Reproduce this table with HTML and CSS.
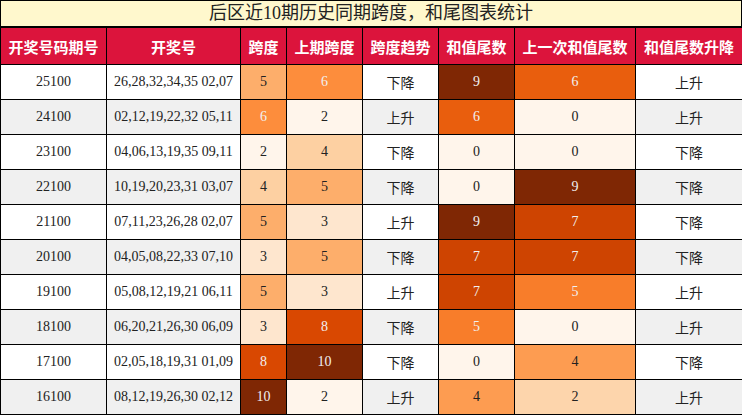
FILE: index.html
```html
<!DOCTYPE html>
<html lang="zh">
<head>
<meta charset="utf-8">
<title>后区近10期历史同期跨度，和尾图表统计</title>
<link rel="stylesheet" href="styles.css">
</head>
<body>
<div class="sheet">
  <div class="title">后区近10期历史同期跨度，和尾图表统计</div>
  <table class="grid">
    <colgroup>
      <col class="c-issue"><col class="c-nums"><col class="c-span"><col class="c-prev">
      <col class="c-trend"><col class="c-sum"><col class="c-psum"><col class="c-dir">
    </colgroup>
    <thead>
      <tr>
        <th>开奖号码期号</th><th>开奖号</th><th>跨度</th><th>上期跨度</th>
        <th>跨度趋势</th><th>和值尾数</th><th>上一次和值尾数</th><th>和值尾数升降</th>
      </tr>
    </thead>
    <tbody>
      <tr>
        <td>25100</td><td>26,28,32,34,35 02,07</td>
        <td class="h h375">5</td><td class="h h500 lt">6</td><td class="cn">下降</td>
        <td class="h h1000 lt">9</td><td class="h s6 lt">6</td><td class="cn">上升</td>
      </tr>
      <tr>
        <td>24100</td><td>02,12,19,22,32 05,11</td>
        <td class="h h500 lt">6</td><td class="h h000">2</td><td class="cn">上升</td>
        <td class="h s6 lt">6</td><td class="h h000">0</td><td class="cn">上升</td>
      </tr>
      <tr>
        <td>23100</td><td>04,06,13,19,35 09,11</td>
        <td class="h h000">2</td><td class="h h250">4</td><td class="cn">下降</td>
        <td class="h h000">0</td><td class="h h000">0</td><td class="cn">下降</td>
      </tr>
      <tr>
        <td>22100</td><td>10,19,20,23,31 03,07</td>
        <td class="h h250">4</td><td class="h h375">5</td><td class="cn">下降</td>
        <td class="h h000">0</td><td class="h h1000 lt">9</td><td class="cn">下降</td>
      </tr>
      <tr>
        <td>21100</td><td>07,11,23,26,28 02,07</td>
        <td class="h h375">5</td><td class="h h125">3</td><td class="cn">上升</td>
        <td class="h h1000 lt">9</td><td class="h s7 lt">7</td><td class="cn">下降</td>
      </tr>
      <tr>
        <td>20100</td><td>04,05,08,22,33 07,10</td>
        <td class="h h125">3</td><td class="h h375">5</td><td class="cn">下降</td>
        <td class="h s7 lt">7</td><td class="h s7 lt">7</td><td class="cn">下降</td>
      </tr>
      <tr>
        <td>19100</td><td>05,08,12,19,21 06,11</td>
        <td class="h h375">5</td><td class="h h125">3</td><td class="cn">上升</td>
        <td class="h s7 lt">7</td><td class="h s5 lt">5</td><td class="cn">上升</td>
      </tr>
      <tr>
        <td>18100</td><td>06,20,21,26,30 06,09</td>
        <td class="h h125">3</td><td class="h h750 lt">8</td><td class="cn">下降</td>
        <td class="h s5 lt">5</td><td class="h h000">0</td><td class="cn">上升</td>
      </tr>
      <tr>
        <td>17100</td><td>02,05,18,19,31 01,09</td>
        <td class="h h750 lt">8</td><td class="h h1000 lt">10</td><td class="cn">下降</td>
        <td class="h h000">0</td><td class="h s4">4</td><td class="cn">下降</td>
      </tr>
      <tr>
        <td>16100</td><td>08,12,19,26,30 02,12</td>
        <td class="h h1000 lt">10</td><td class="h h000">2</td><td class="cn">上升</td>
        <td class="h s4">4</td><td class="h s2">2</td><td class="cn">上升</td>
      </tr>
    </tbody>
  </table>
</div>
</body>
</html>
```

FILE: styles.css
```css
html, body {
  margin: 0;
  padding: 0;
  background: #ffffff;
}

.sheet {
  width: 742px;
  font-family: "Liberation Serif", "Noto Sans CJK SC", serif;
  color: #222222;
}

.title {
  box-sizing: border-box;
  height: 27px;
  border: 1px solid #000000;
  background: #fff8cd;
  text-align: center;
  font-size: 18px;
  line-height: 25px;
  color: #222222;
}

.grid {
  width: 742px;
  table-layout: fixed;
  border-collapse: collapse;
  border: 1px solid #000000;
}

.c-issue { width: 106px; }
.c-nums  { width: 134px; }
.c-span  { width: 46px; }
.c-prev  { width: 76px; }
.c-trend { width: 76px; }
.c-sum   { width: 76px; }
.c-psum  { width: 121px; }
.c-dir   { width: 107px; }

.grid th,
.grid td {
  border: 1px solid #000000;
  padding: 0;
  text-align: center;
  vertical-align: middle;
  white-space: nowrap;
  overflow: hidden;
}

.grid thead tr { height: 37px; }
.grid tbody tr { height: 35px; }

.grid th {
  background: #dc143c;
  color: #ffffff;
  font-family: "Noto Sans CJK SC", sans-serif;
  font-weight: 700;
  font-size: 15px;
}

.grid td {
  font-size: 14px;
}

.grid tbody tr:nth-child(odd) td { background: #ffffff; }
.grid tbody tr:nth-child(even) td { background: #f0f0f0; }

.grid td.cn {
  font-family: "Noto Sans CJK SC", sans-serif;
  font-size: 14px;
}

/* Oranges colour scale */
.grid tbody tr td.h000  { background: #fff5eb; }
.grid tbody tr td.h125  { background: #fee6ce; }
.grid tbody tr td.h250  { background: #fdd0a2; }
.grid tbody tr td.h375  { background: #fdae6b; }
.grid tbody tr td.h500  { background: #fd8d3c; }
.grid tbody tr td.h750  { background: #d94801; }
.grid tbody tr td.h1000 { background: #7f2704; }
.grid tbody tr td.s2    { background: #fdd5ac; }
.grid tbody tr td.s4    { background: #fd9c51; }
.grid tbody tr td.s5    { background: #f87d2a; }
.grid tbody tr td.s6    { background: #e95e0d; }
.grid tbody tr td.s7    { background: #ce4401; }

.grid td.lt { color: #f1f1f1; }
```
